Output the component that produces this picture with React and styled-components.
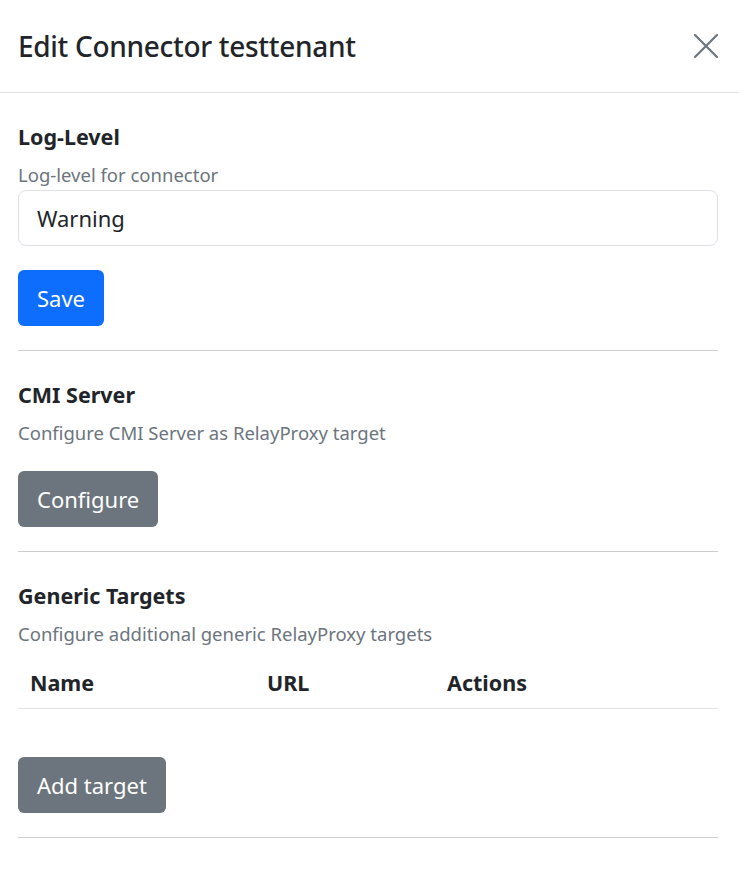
import React from "react";
import styled, { createGlobalStyle } from "styled-components";

const Global = createGlobalStyle`
  body { margin: 0; background: #fff; font-family: "Noto Sans", "Open Sans", sans-serif; color: #212529; }
`;
const Header = styled.div`
  height: 93px; box-sizing: border-box; border-bottom: 1px solid #dee2e6;
  display: flex; align-items: center; justify-content: space-between; padding: 0 20px 0 18px;
`;
const Title = styled.h1`margin: 0; font-size: 28px; font-weight: 500; letter-spacing: -0.3px;`;
const Close = styled.button`border: 0; background: none; padding: 0; display: flex; cursor: pointer;`;
const Body = styled.div`padding: 28px 21px 0 18px;`;
const Section = styled.div`
  padding-bottom: 24px; border-bottom: 1px solid #ccc; margin-bottom: 28px;
`;
const H = styled.h2`margin: 0 0 8px; font-size: 21.5px; font-weight: 700; line-height: 32px;`;
const Desc = styled.div`font-size: 18.5px; color: #6c757d; line-height: 28px; margin-bottom: ${p => p.$mb || 0}px;`;
const Input = styled.div`
  height: 56px; box-sizing: border-box; border: 1px solid #dee2e6; border-radius: 8px;
  display: flex; align-items: center; padding-left: 18px; font-size: 22px; margin-top: 1px; margin-bottom: 24px;
`;
const Button = styled.button`
  height: 56px; padding: 0 19px; border: 0; border-radius: 6px; color: #fff;
  font-family: inherit; font-size: 22px; background: ${p => p.$primary ? "#0d6efd" : "#6c757d"};
`;
const Table = styled.div`
  display: grid; grid-template-columns: 237px 180px 1fr; padding: 0 12px; height: 52px; align-items: center;
  border-bottom: 1px solid #dee2e6; font-weight: 700; font-size: 21.5px; margin-bottom: 48px;
`;

export default function App() {
  return (
    <>
      <Global />
      <Header>
        <Title>Edit Connector testtenant</Title>
        <Close aria-label="close">
          <svg width="26" height="26" viewBox="0 0 26 26" stroke="#6c757d" strokeWidth="2.2" strokeLinecap="round">
            <path d="M2 2L24 24M24 2L2 24" />
          </svg>
        </Close>
      </Header>
      <Body>
        <Section>
          <H>Log-Level</H>
          <Desc>Log-level for connector</Desc>
          <Input>Warning</Input>
          <Button $primary>Save</Button>
        </Section>
        <Section>
          <H>CMI Server</H>
          <Desc $mb={24}>Configure CMI Server as RelayProxy target</Desc>
          <Button>Configure</Button>
        </Section>
        <Section>
          <H>Generic Targets</H>
          <Desc $mb={8}>Configure additional generic RelayProxy targets</Desc>
          <Table><span>Name</span><span>URL</span><span>Actions</span></Table>
          <Button>Add target</Button>
        </Section>
      </Body>
    </>
  );
}
